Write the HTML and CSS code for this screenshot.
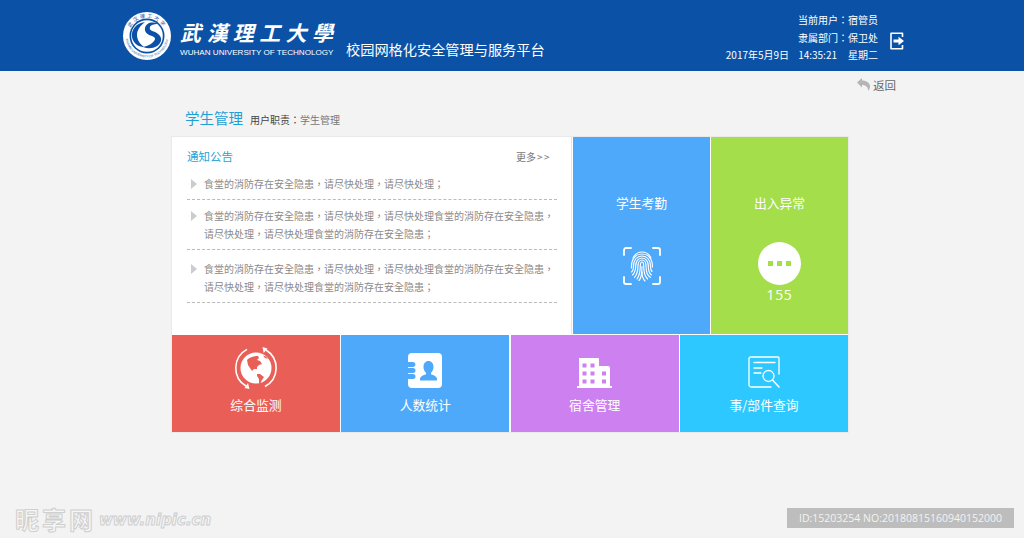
FILE: index.html
```html
<!DOCTYPE html>
<html lang="zh-CN">
<head>
<meta charset="utf-8">
<title>校园网格化安全管理与服务平台</title>
<link rel="stylesheet" href="styles.css">
</head>
<body>
<header class="topbar">
  <div class="brand">
    <svg class="seal" viewBox="0 0 50 50" width="50" height="50" aria-hidden="true">
      <circle cx="25" cy="25" r="24" fill="#fff"/>
      <circle cx="25" cy="25" r="17.500" fill="#0b52a7"/>
      <circle cx="25" cy="25" r="15.800" fill="#fff"/>
      <path d="M23 11C14 12 9 19 10 26c1 6 6 10 12 10-4-3-7-7-7-12 0-5 3-9 8-13z" fill="#0b52a7"/>
      <path d="M36 13c-6-3-12-1-13 4-1 4 3 7 7 8 3 1 4 3 2 5-2 3-6 5-11 6 8 3 16 0 18-6 1-4-2-7-6-9-3-1-6-2-5-5 .5-2 4-3 8-3z" fill="#0b52a7"/>
      <defs>
        <path id="arcTop" d="M6.500 25a18.500 18.500 0 0 1 37 0"/>
        <path id="arcBot" d="M3.500 25a21.500 21.500 0 0 0 43 0"/>
      </defs>
      <text class="seal-cn"><textPath href="#arcTop" startOffset="50%" text-anchor="middle">武汉理工大学</textPath></text>
      <text class="seal-en"><textPath href="#arcBot" startOffset="50%" text-anchor="middle">WUHAN UNIVERSITY OF TECHNOLOGY</textPath></text>
    </svg>
    <div class="brand-name">
      <div class="brand-cn" lang="zh-Hant">武漢理工大學</div>
      <div class="brand-en">WUHAN UNIVERSITY OF TECHNOLOGY</div>
    </div>
    <div class="brand-title">校园网格化安全管理与服务平台</div>
  </div>
  <div class="account">
    <div class="account-info">
      <div lang="zh-Hant">当前用户：宿管员</div>
      <div lang="zh-Hant">隶属部门：保卫处</div>
      <div class="clock"><span>2017年5月9日</span><span>14:35:21</span><span>星期二</span></div>
    </div>
    <svg class="logout" viewBox="0 0 14 18" width="14" height="18" aria-hidden="true">
      <path d="M12.500 5V1.200H1v15.600h11.500V13" fill="none" stroke="#fff" stroke-width="1.600" stroke-linejoin="round"/>
      <path d="M3.500 7.400h5V4.800L14 9l-5.500 4.200v-2.600h-5z" fill="#fff"/>
    </svg>
  </div>
</header>

<div class="backrow">
  <svg class="back-ico" viewBox="0 0 13 13" width="13" height="13" aria-hidden="true">
    <path d="M0 4.500 5 0v2.600c4.500 0 8 2.400 8 6 0 1.800-.8 3.400-2 4.400.5-3.400-1.800-6-6-6v2.500z" fill="#b5b5b5"/>
  </svg>
  <span>返回</span>
</div>

<main class="board">
  <div class="heading">
    <h1>学生管理</h1>
    <p lang="zh-Hant"><span class="duty-key">用户职责：</span>学生管理</p>
  </div>
  <div class="panel">
    <div class="row-top">
      <section class="notice">
        <div class="notice-head">
          <h2>通知公告</h2>
          <span class="more">更多<span class="more-arrows">&gt;&gt;</span></span>
        </div>
        <ul class="notice-list" lang="zh-Hant">
          <li>食堂的消防存在安全隐患，请尽快处理，请尽快处理；</li>
          <li>食堂的消防存在安全隐患，请尽快处理，请尽快处理食堂的消防存在安全隐患，请尽快处理，请尽快处理食堂的消防存在安全隐患；</li>
          <li>食堂的消防存在安全隐患，请尽快处理，请尽快处理食堂的消防存在安全隐患，请尽快处理，请尽快处理食堂的消防存在安全隐患；</li>
        </ul>
      </section>
      <a class="tile tall blue">
        <span class="tile-label">学生考勤</span>
        <svg class="finger" viewBox="0 0 38 38" width="38" height="38" aria-hidden="true" fill="none" stroke="#fff" stroke-linecap="round">
          <g stroke-width="1.800">
            <path d="M8 1H3a2 2 0 0 0-2 2v5"/>
            <path d="M30 1h5a2 2 0 0 1 2 2v5"/>
            <path d="M1 30v5a2 2 0 0 0 2 2h5"/>
            <path d="M37 30v5a2 2 0 0 1-2 2h-5"/>
          </g>
          <g stroke-width="1.150">
            <path d="M10 11c2-4 5.500-6 9-6s7 2 9 6"/>
            <path d="M8.500 21c-.5-9 4-14 10.500-14s10.500 5 10.500 13"/>
            <path d="M8.500 25c1.500-1 2-3 2-6 0-6 3.500-10 8.500-10s8.500 4 8.500 10c0 3 .5 4.500 1.500 5.500"/>
            <path d="M9.500 28c2-2 3.200-5 3.200-9 0-4.500 2.500-8 6.300-8s6.300 3.500 6.300 8c0 4 .7 7 3 9"/>
            <path d="M11.500 30.500c2.500-3 3.500-7 3.500-11.500 0-3 1.500-6 4-6s4 3 4 6c0 5 1 9.500 4.500 11.500"/>
            <path d="M14 32c2.500-3.500 3.300-8 3.300-13 0-2 .7-4 1.700-4s1.700 2 1.700 4c0 5 .8 10 3.800 13"/>
            <path d="M16 33.500c2-2 3-6 3-14"/>
            <path d="M19 25c0 4 1 7 3 9"/>
          </g>
        </svg>
      </a>
      <a class="tile tall green">
        <span class="tile-label">出入异常</span>
        <span class="bubble"><i></i><i></i><i></i></span>
        <span class="count">155</span>
      </a>
    </div>
    <div class="row-bottom">
      <a class="tile wide red">
        <span class="tile-ico">
          <svg class="globe" viewBox="0 0 44 44" width="44" height="44" aria-hidden="true">
            <circle cx="22" cy="22" r="15.500" fill="#fff"/>
            <path d="M13 14c3-3 7-4 11-4l1 2-2 2 3 1 2 3-3 1-2 2v2h-3l-2 2-2-3-2-3z" fill="#e95f58"/>
            <path d="M23 28h3l4 3-2 3-2 4-1-1v-4l-2-3z" fill="#e95f58"/>
            <path d="M29 9.500l3 1 2 2.500-3-1z" fill="#e95f58"/>
            <g fill="none" stroke="#fff" stroke-width="1.600">
              <path d="M13 3.400A21 21 0 0 0 12 40"/>
              <path d="M31 40.500A21 21 0 0 0 32 4"/>
            </g>
            <path d="M15.500 43l-5-1 3.500-5zM28.500 1l5 1.500-3.800 4.500z" fill="#fff"/>
          </svg>
        </span>
        <span class="tile-label">综合监测</span>
      </a>
      <a class="tile wide blue">
        <span class="tile-ico">
          <svg viewBox="0 0 34 35" width="34" height="35" aria-hidden="true">
            <path d="M4 0h26a4 4 0 0 1 4 4v27a4 4 0 0 1-4 4H4a4 4 0 0 1-4-4v-5h5a2 2 0 0 0 0-5H0v-1h5a2 2 0 0 0 0-5H0v-1h5a2 2 0 0 0 0-5H0V4a4 4 0 0 1 4-4z" fill="#fff" fill-rule="evenodd"/>
            <path d="M20.500 8c3 0 5 2.500 5 6 0 2.500-1 4.500-2.500 5.700v1.600c2.800 1 6 2.300 6 4.700v1.500H12v-1.500c0-2.400 3.200-3.700 6-4.700v-1.600C16.500 18.500 15.500 16.500 15.500 14c0-3.500 2-6 5-6z" fill="#4fa9fb"/>
          </svg>
        </span>
        <span class="tile-label">人数统计</span>
      </a>
      <a class="tile wide purple">
        <span class="tile-ico">
          <svg viewBox="0 0 35 30" width="35" height="30" aria-hidden="true">
            <path d="M2 0h19a1 1 0 0 1 1 1v7h9a2 2 0 0 1 2 2v18h2v2H0v-2h2z" fill="#fff"/>
            <g fill="#cd80f0">
              <rect x="5.500" y="5.500" width="4" height="4"/><rect x="13.500" y="5.500" width="4" height="4"/>
              <rect x="5.500" y="13.500" width="4" height="4"/><rect x="13.500" y="13.500" width="4" height="4"/><rect x="25" y="13.500" width="4" height="4"/>
              <rect x="5.500" y="21.500" width="4" height="4"/><rect x="13.500" y="21.500" width="4" height="4"/><rect x="25" y="21.500" width="4" height="4"/>
            </g>
          </svg>
        </span>
        <span class="tile-label">宿舍管理</span>
      </a>
      <a class="tile wide cyan">
        <span class="tile-ico">
          <svg viewBox="0 0 33 32" width="33" height="32" aria-hidden="true" fill="none" stroke="#fff" stroke-width="1.300" stroke-linecap="round">
            <path d="M23 31H3a2 2 0 0 1-2-2V3a2 2 0 0 1 2-2h27a1 1 0 0 1 1 1v16"/>
            <path d="M6 6.500h21M6 12h8M6 17h7"/>
            <circle cx="20.500" cy="20" r="5.500"/>
            <path d="M24.500 24l6.500 7" stroke-width="1.500"/>
          </svg>
        </span>
        <span class="tile-label">事/部件查询</span>
      </a>
    </div>
  </div>
</main>

<div class="mark-site"><span class="mark-cn">昵享网</span><span class="mark-en">www.nipic.cn</span></div>
<div class="mark-id">ID:15203254 NO:20180815160940152000</div>
</body>
</html>
```
FILE: styles.css
```css
* { box-sizing: border-box; }
html, body { height: 100%; }
body {
  margin: 0;
  background: #f3f3f3;
  color: #666;
  font-family: "Noto Sans CJK SC", "Noto Sans", sans-serif;
  position: relative;
  overflow: hidden;
}
[lang="zh-Hant"] { font-family: "Noto Sans CJK TC", "Noto Sans CJK SC", sans-serif; }
a { color: inherit; text-decoration: none; }

.topbar {
  height: 71px;
  background: #0b52a7;
  color: #fff;
  display: flex;
  justify-content: space-between;
  padding: 0 120px 0 122px;
}
.brand { display: flex; align-items: flex-start; }
.seal { margin-top: 11px; flex: none; }
.seal-cn { font-size: 5px; fill: #0b52a7; letter-spacing: 1.800px; }
.seal-en { font-size: 3.200px; fill: #0b52a7; font-family: "Liberation Sans", sans-serif; }
.brand-name { margin: 18px 0 0 8px; width: 157px; }
.brand-cn {
  font-size: 21px;
  line-height: 28px;
  font-weight: 700;
  font-style: italic;
  letter-spacing: 5.400px;
  white-space: nowrap;
}
.brand-en {
  font-family: "Liberation Sans", sans-serif;
  font-size: 8.100px;
  line-height: 12px;
  margin-top: 1px;
  white-space: nowrap;
}
.brand-title {
  margin: 39px 0 0 9px;
  font-size: 14.200px;
  line-height: 20px;
  font-weight: 400;
  white-space: nowrap;
}
.account { display: flex; align-items: flex-start; }
.account-info {
  margin-top: 11px;
  font-size: 10px;
  line-height: 17.500px;
  text-align: right;
  font-weight: 400;
}
.clock { display: flex; justify-content: flex-end; gap: 9px; white-space: nowrap; }
.clock span:last-child { margin-left: 2px; }
.logout { margin: 32px 0 0 12px; }

.backrow {
  height: 27px;
  display: flex;
  justify-content: flex-end;
  align-items: center;
  gap: 3px;
  padding-right: 128px;
  font-size: 11.500px;
  color: #666;
}

.board { width: 678px; margin-left: 171px; padding-top: 6px; }
.heading {
  height: 32px;
  display: flex;
  align-items: center;
  gap: 7px;
  padding: 0 0 5px 14px;
}
.heading h1 {
  margin: 0;
  font-size: 14.500px;
  font-weight: 400;
  color: #1da0d8;
}
.heading p {
  margin: 3px 0 0;
  font-size: 10px;
  color: #777;
}
.duty-key { color: #444; }

.panel {
  background: #fff;
  border: 1px solid #e9e9e9;
  display: flex;
  flex-direction: column;
  gap: 1px;
}
.row-top { display: flex; gap: 1px; height: 197px; }
.row-bottom { display: grid; grid-template-columns: repeat(4, 1fr); gap: 1.500px; height: 97px; }

.notice { flex: 1; min-width: 0; padding: 0 14px 0 15px; border-right: 1px solid #e4e4e4; }
.notice-head {
  height: 38px;
  display: flex;
  justify-content: space-between;
  align-items: center;
  padding: 1px 6px 1px 0;
  color: #777;
}
.notice-head h2 {
  margin: 0;
  font-size: 11.500px;
  font-weight: 400;
  color: #2aa3d8;
}
.more { font-size: 10px; }
.more-arrows { letter-spacing: 1.500px; margin-left: 1px; }
.notice-list { list-style: none; margin: 0; padding: 0; }
.notice-list li {
  position: relative;
  padding: 0 0 6px 17px;
  font-size: 10px;
  line-height: 18px;
  color: #8a8a8a;
  border-bottom: 1px dashed #bbb;
}
.notice-list li::before {
  content: "";
  position: absolute;
  left: 4px;
  border-left: 6px solid #ccc;
  border-top: 5.500px solid transparent;
  border-bottom: 5.500px solid transparent;
}
.notice-list li:nth-child(1) { padding-top: 0; padding-bottom: 6px; }
.notice-list li:nth-child(2) { padding-top: 7px; }
.notice-list li:nth-child(3) { padding-top: 10px; }
.notice-list li:nth-child(1)::before { top: 4px; }
.notice-list li:nth-child(2)::before { top: 11px; }
.notice-list li:nth-child(3)::before { top: 14px; }

.tile {
  color: #fff;
  display: flex;
  flex-direction: column;
  align-items: center;
}
.tile-label { font-size: 12.800px; line-height: 20px; white-space: nowrap; font-weight: 400; }
.tall { width: 137px; flex: none; padding-top: 56px; }
.wide { padding-top: 9px; }
.tile-ico { height: 44px; display: flex; align-items: flex-end; margin-bottom: 7px; }
.tile-ico svg { display: block; }
.tile-ico .globe { margin-bottom: -2px; }
.blue { background: #4fa9fb; }
.green { background: #a4de4a; }
.red { background: #e95f58; }
.purple { background: #cd80f0; }
.cyan { background: #2dc8ff; }

.finger { margin-top: 34px; }
.bubble {
  width: 43px;
  height: 43px;
  margin-top: 29px;
  border-radius: 50%;
  background: #fff;
  display: flex;
  justify-content: center;
  align-items: center;
  gap: 4px;
}
.bubble i { width: 5px; height: 5px; background: #a4de4a; margin-top: -1px; }
.count { font-size: 14px; line-height: 20px; letter-spacing: .6px; font-family: "Open Sans", sans-serif; }

.mark-site {
  position: absolute;
  left: 15px;
  bottom: 4px;
  display: flex;
  align-items: center;
  gap: 3px;
  color: #f6f6f6;
  font-weight: 700;
  -webkit-text-stroke: 1px #cfcfcf;
}
.mark-cn { font-size: 24px; line-height: 30px; letter-spacing: 3px; }
.mark-en { font-family: "DejaVu Sans", sans-serif; font-size: 15px; font-style: italic; margin-top: 2px; }
.mark-id {
  position: absolute;
  left: 787px;
  top: 508px;
  width: 227px;
  height: 20px;
  background: #bdbdbd;
  color: #f3f3f3;
  font-family: "Open Sans", sans-serif;
  font-size: 10.500px;
  line-height: 20px;
  text-align: center;
  white-space: nowrap;
}
```
